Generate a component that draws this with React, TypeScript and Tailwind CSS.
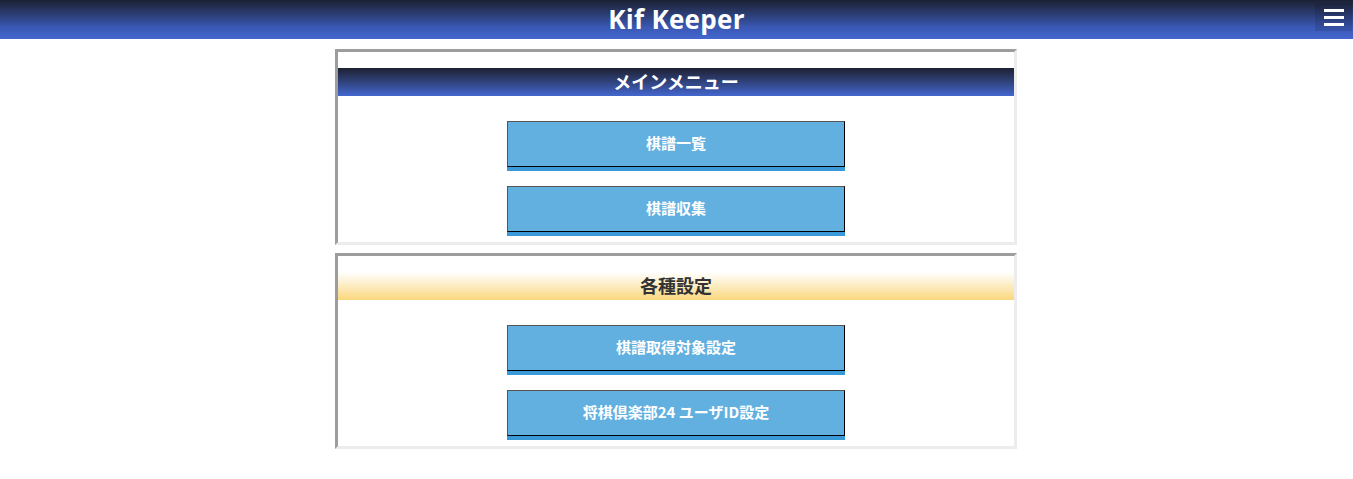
const jp = { fontFamily: '"Noto Sans CJK JP", "Noto Sans", sans-serif' };

const sections = [
  {
    title: "メインメニュー",
    bar: "bg-gradient-to-b from-[#1d2133] to-[#4467d0] text-white",
    items: ["棋譜一覧", "棋譜収集"],
  },
  {
    title: "各種設定",
    bar: "bg-gradient-to-b from-white to-[#fad77a] text-[#333]",
    items: ["棋譜取得対象設定", "将棋倶楽部24 ユーザID設定"],
  },
];

function MenuButton({ label }: { label: string }) {
  return (
    <button
      className="w-[338px] h-[46px] pb-[3px] leading-none bg-[#62b0e0] border border-t-[#555] border-l-[#555] border-r-black border-b-black shadow-[0_4px_0_#3a9ad9] text-white text-[15px] font-bold"
      style={jp}
    >
      {label}
    </button>
  );
}

export default function App() {
  return (
    <div className="min-h-[479px] bg-white" style={jp}>
      {/* Header */}
      <header className="relative h-[39px] bg-gradient-to-b from-[#1c2134] via-[#3a58b4] via-70% to-[#4467d0] flex items-center justify-center">
        <h1
          className="text-white text-[26px] font-bold leading-none pb-[2px] tracking-[0.3px]"
          style={{ fontFamily: '"Open Sans", "Noto Sans", sans-serif' }}
        >
          Kif Keeper
        </h1>
        <button className="absolute right-[1px] top-[3px] w-[37px] h-[28px] bg-black/10 flex flex-col items-center justify-center gap-[4px]">
          <span className="block w-[20px] h-[3px] bg-white" />
          <span className="block w-[20px] h-[3px] bg-white" />
          <span className="block w-[20px] h-[3px] bg-white" />
        </button>
      </header>

      <main className="flex flex-col items-center gap-[8px] pt-[10px] pr-[1px]">
        {sections.map((s) => (
          <section
            key={s.title}
            className="w-[682px] border-[3px] border-t-[#9d9d9d] border-l-[#9d9d9d] border-r-[#ececec] border-b-[#ececec] pt-[16px] pb-[6px]"
          >
            <div
              className={`h-[28px] pb-[3px] leading-none flex items-center justify-center text-[18px] font-bold ${s.bar}`}
            >
              {s.title}
            </div>
            <div className="flex flex-col items-center gap-[15px] pt-[25px]">
              {s.items.map((it) => (
                <div key={it} className="pb-[4px]">
                  <MenuButton label={it} />
                </div>
              ))}
            </div>
          </section>
        ))}
      </main>
    </div>
  );
}
